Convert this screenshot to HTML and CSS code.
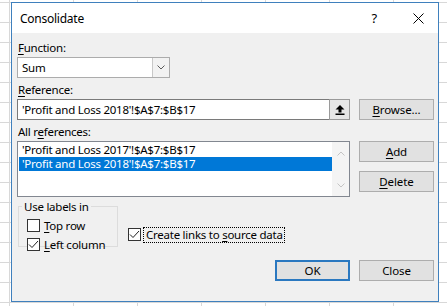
FILE: index.html
```html
<!DOCTYPE html>
<html lang="en">
<head>
    <meta charset="UTF-8">
    <title>Consolidate</title>
    <link rel="stylesheet" href="styles.css">
</head>
<body>
    <div class="dialog">
        <div class="titlebar">
            <span class="title">Consolidate</span>
            <span class="help">?</span>
            <span class="close">
                <svg width="11" height="11" viewBox="0 0 11 11"><path d="M0.5 0.5L10.5 10.5M10.5 0.5L0.5 10.5" stroke="#000" stroke-width="1" fill="none"/></svg>
            </span>
        </div>

        <div class="content">
            <div class="label label-function"><u>F</u>unction:</div>
            <div class="combo">
                <span class="combo-value">Sum</span>
                <span class="combo-arrow">
                    <svg width="8" height="5" viewBox="0 0 8 5"><path d="M0.5 0.5L4 4L7.5 0.5" stroke="#5a5a5a" fill="none"/></svg>
                </span>
            </div>

            <div class="label label-reference"><u>R</u>eference:</div>
            <div class="row ref-row">
                <div class="ref-input">
                    <span class="ref-text">'Profit and Loss 2018'!$A$7:$B$17</span>
                    <span class="collapse-btn">
                        <svg width="10" height="10" viewBox="0 0 10 10">
                            <path d="M5 0L9.5 4.5H6.5V7.5H3.5V4.5H0.5Z" fill="#000"/>
                            <rect x="0.5" y="8.5" width="9" height="1.5" fill="#000"/>
                        </svg>
                    </span>
                </div>
                <button class="btn"><u>B</u>rowse...</button>
            </div>

            <div class="label label-all">All r<u>e</u>ferences:</div>
            <div class="row list-row">
                <div class="listbox">
                    <div class="items">
                        <div class="item">'Profit and Loss 2017'!$A$7:$B$17</div>
                        <div class="item selected">'Profit and Loss 2018'!$A$7:$B$17</div>
                    </div>
                    <div class="scrollbar">
                        <svg width="8" height="5" viewBox="0 0 8 5"><path d="M0.5 4.5L4 1L7.5 4.5" stroke="#c4c4c4" fill="none"/></svg>
                        <svg width="8" height="5" viewBox="0 0 8 5"><path d="M0.5 0.5L4 4L7.5 0.5" stroke="#c4c4c4" fill="none"/></svg>
                    </div>
                </div>
                <div class="side-buttons">
                    <button class="btn"><u>A</u>dd</button>
                    <button class="btn"><u>D</u>elete</button>
                </div>
            </div>

            <div class="options-row">
                <fieldset class="group">
                    <legend>Use labels in</legend>
                    <div class="check">
                        <span class="box"></span>
                        <span><u>T</u>op row</span>
                    </div>
                    <div class="check">
                        <span class="box">
                            <svg width="11" height="11" viewBox="0 0 11 11"><path d="M1 5.5L4 8.5L10 2" stroke="#222" fill="none"/></svg>
                        </span>
                        <span><u>L</u>eft column</span>
                    </div>
                </fieldset>
                <div class="check links">
                    <span class="box">
                        <svg width="11" height="11" viewBox="0 0 11 11"><path d="M1 5.5L4 8.5L10 2" stroke="#222" fill="none"/></svg>
                    </span>
                    <span class="focus">Create links to <u>s</u>ource data</span>
                </div>
            </div>

            <div class="footer">
                <button class="btn default">OK</button>
                <button class="btn">Close</button>
            </div>
        </div>
    </div>
</body>
</html>
```

FILE: styles.css
```css
body {
    margin: 0;
    height: 306px;
    overflow: hidden;
    font-family: "Noto Sans", "Open Sans", sans-serif;
    font-size: 11.5px;
    letter-spacing: -0.25px;
    color: #000;
    background:
        linear-gradient(to right, #d8d8d8 1px, transparent 1px) 9px 0 / 64px 20px,
        linear-gradient(to bottom, #d8d8d8 1px, transparent 1px) 0 2px / 64px 20px,
        #fff;
}

u {
    text-decoration-thickness: 1px;
    text-underline-offset: 2px;
}

.dialog {
    width: 426px;
    height: 298px;
    margin: 2px 0 0 11px;
    border: 1px solid #3f80bd;
    background: #f0f0f0;
    display: flex;
    flex-direction: column;
}

.titlebar {
    height: 30px;
    flex: none;
    background: #fff;
    display: flex;
    align-items: center;
    padding-left: 8px;
}

.title {
    font-size: 12px;
}

.help {
    margin-left: auto;
    font-size: 13px;
}

.close {
    display: flex;
    margin-left: 36px;
    padding-right: 14px;
}

.content {
    padding: 0 4px 0 5px;
}

.label {
    line-height: 15px;
    padding-left: 1px;
}

.label-function { margin-top: 7px; }
.label-reference { margin-top: 4px; }
.label-all { margin-top: 4px; }

.combo {
    margin-top: 2px;
    width: 151px;
    height: 19px;
    border: 1px solid #acacac;
    background: #fff;
    display: flex;
    align-items: stretch;
}

.combo-value {
    flex: 1;
    padding-left: 4px;
    line-height: 19px;
}

.combo-arrow {
    width: 16px;
    border-left: 1px solid #c8c8c8;
    background: #f2f2f2;
    display: flex;
    align-items: center;
    justify-content: center;
}

.row {
    display: flex;
    gap: 9px;
}

.ref-row {
    margin-top: 2px;
}

.ref-input {
    width: 331px;
    height: 19px;
    border: 1px solid #7a7a7a;
    background: #fff;
    display: flex;
}

.ref-text {
    flex: 1;
    padding-left: 4px;
    line-height: 19px;
}

.collapse-btn {
    width: 19px;
    border: 1px solid #9a9a9a;
    margin: -1px -1px -1px 0;
    background: #e6e6e6;
    display: flex;
    align-items: center;
    justify-content: center;
}

.btn {
    width: 75px;
    height: 21px;
    padding: 0;
    border: 1px solid #adadad;
    background: #e1e1e1;
    font-family: inherit;
    font-size: 11.5px;
    letter-spacing: -0.1px;
    color: #000;
}

.btn.default {
    border: 2px solid #2a78c0;
}

.list-row {
    margin-top: 2px;
}

.listbox {
    width: 331px;
    height: 54px;
    border: 1px solid #828790;
    background: #fff;
    display: flex;
}

.items {
    flex: 1;
    padding-top: 1px;
}

.item {
    line-height: 14px;
    height: 14px;
    margin-left: 1px;
    padding-left: 3px;
}

.item.selected {
    background: #0078d7;
    color: #fff;
}

.scrollbar {
    width: 17px;
    background: #f4f4f4;
    display: flex;
    flex-direction: column;
    align-items: center;
    justify-content: space-between;
    padding: 9px 0 8px;
}

.side-buttons {
    display: flex;
    flex-direction: column;
    gap: 9px;
}

.options-row {
    margin-top: 2px;
    display: flex;
    align-items: flex-end;
}

.group {
    margin: 0 0 0 1px;
    width: 98px;
    height: 46px;
    padding: 0;
    border: 1px solid #dcdcdc;
    box-sizing: content-box;
}

.group legend {
    margin-left: 3px;
    padding: 0 2px;
    line-height: 15px;
}

.check {
    display: flex;
    align-items: center;
    gap: 4px;
    height: 15px;
}

.group .check {
    margin-left: 8px;
    margin-top: 4px;
}

.box {
    width: 11px;
    height: 11px;
    border: 1px solid #333;
    background: #fff;
    display: flex;
    align-items: center;
    justify-content: center;
}

.links {
    margin-left: 10px;
    margin-bottom: 5px;
    gap: 2px;
}

.focus {
    border: 1px dotted #000;
    padding: 0 1px 0 2px;
    line-height: 14px;
}

.footer {
    margin-top: 13px;
    display: flex;
    justify-content: flex-end;
    gap: 9px;
}
```
